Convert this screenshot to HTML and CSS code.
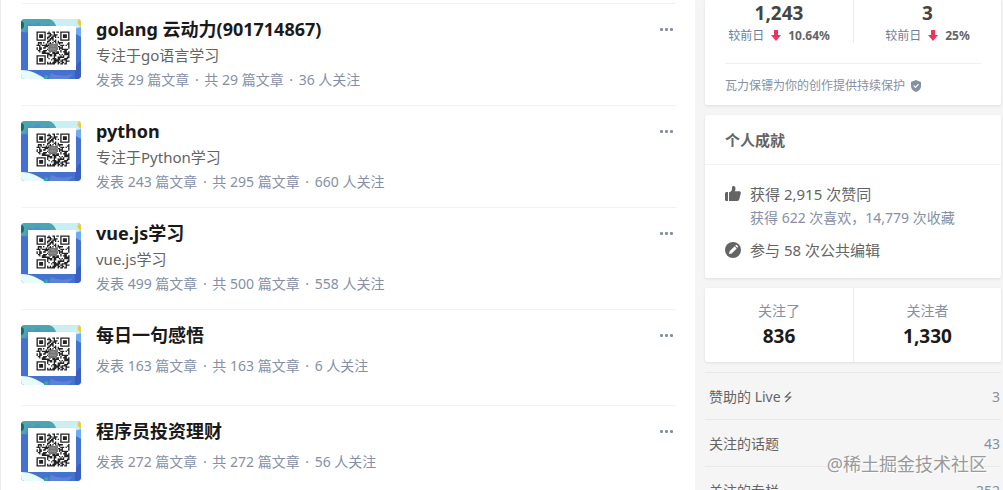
FILE: index.html
```html
<!DOCTYPE html>
<html lang="zh-CN">
<head>
    <meta charset="utf-8">
    <meta name="viewport" content="width=device-width, initial-scale=1">
    <title>专栏</title>
    <link rel="stylesheet" href="styles.css">
</head>
<body>
<svg class="defs" width="0" height="0" aria-hidden="true">
    <symbol id="cover" viewBox="0 0 60 60">
        <rect width="60" height="60" fill="#4373cf"/>
        <path d="M0 0h60v12L34 10 0 12z" fill="#c9eff5"/>
        <path d="M0 0h28q6 1 8 10L20 14 0 13z" fill="#4ba6b2"/>
        <path d="M7 4l5 2 5-3 4 4 7-2 4 8H4z" fill="#508fd0"/>
        <path d="M0 2q3 0 3 4T0 10z" fill="#176b62"/>
        <path d="M60 0q-5 2-3 5t3 2z" fill="#f1cb2b"/>
        <path d="M53 10l7-2v10l-5-3z" fill="#6faaf0"/>
        <path d="M60 42q-7 3-6 18h6z" fill="#3a5fc0"/>
        <path d="M0 51q8 0 14 3t11 6H0z" fill="#e6fbfa"/>
        <path d="M24 56l4 1-2 3h-3z" fill="#35a99d"/>
        <path d="M30 54q10 5 22 1l-5 5H28z" fill="#5e82dc"/>
        <rect x="7" y="7" width="48" height="44" fill="#fff"/>
        <path id="qr" d="" fill="#222"/>
        <rect x="28" y="25" width="8" height="8" fill="#777"/>
        <path d="M30 27h4M29 30h6" stroke="#999"/>
    </symbol>
    <symbol id="down" viewBox="0 0 10 11">
        <path d="M3 0h4v5h3L5 11 0 5h3z" fill="#f1325f"/>
    </symbol>
</svg>
<div class="page">
    <main class="columns">
        <article class="item">
            <svg class="cover"><use href="#cover"/></svg>
            <div class="info">
                <h2><a href="#">golang 云动力(901714867)</a></h2>
                <p class="desc">专注于go语言学习</p>
                <p class="meta">发表 29 篇文章 <span class="dot">·</span> 共 29 篇文章 <span class="dot">·</span> 36 人关注</p>
            </div>
            <button class="more" aria-label="更多"><i></i><i></i><i></i></button>
        </article>
        <article class="item">
            <svg class="cover"><use href="#cover"/></svg>
            <div class="info">
                <h2><a href="#">python</a></h2>
                <p class="desc">专注于Python学习</p>
                <p class="meta">发表 243 篇文章 <span class="dot">·</span> 共 295 篇文章 <span class="dot">·</span> 660 人关注</p>
            </div>
            <button class="more" aria-label="更多"><i></i><i></i><i></i></button>
        </article>
        <article class="item">
            <svg class="cover"><use href="#cover"/></svg>
            <div class="info">
                <h2><a href="#">vue.js学习</a></h2>
                <p class="desc">vue.js学习</p>
                <p class="meta">发表 499 篇文章 <span class="dot">·</span> 共 500 篇文章 <span class="dot">·</span> 558 人关注</p>
            </div>
            <button class="more" aria-label="更多"><i></i><i></i><i></i></button>
        </article>
        <article class="item">
            <svg class="cover"><use href="#cover"/></svg>
            <div class="info">
                <h2><a href="#">每日一句感悟</a></h2>
                <p class="meta">发表 163 篇文章 <span class="dot">·</span> 共 163 篇文章 <span class="dot">·</span> 6 人关注</p>
            </div>
            <button class="more" aria-label="更多"><i></i><i></i><i></i></button>
        </article>
        <article class="item">
            <svg class="cover"><use href="#cover"/></svg>
            <div class="info">
                <h2><a href="#">程序员投资理财</a></h2>
                <p class="meta">发表 272 篇文章 <span class="dot">·</span> 共 272 篇文章 <span class="dot">·</span> 56 人关注</p>
            </div>
            <button class="more" aria-label="更多"><i></i><i></i><i></i></button>
        </article>
    </main>

    <aside class="side">
        <section class="card creator">
            <div class="stats">
                <div class="stat">
                    <strong>1,243</strong>
                    <div class="trend">较前日 <svg class="arrow"><use href="#down"/></svg> <b>10.64%</b></div>
                </div>
                <div class="stat">
                    <strong>3</strong>
                    <div class="trend">较前日 <svg class="arrow"><use href="#down"/></svg> <b>25%</b></div>
                </div>
            </div>
            <a class="guard" href="#">瓦力保镖为你的创作提供持续保护
                <svg class="shield" viewBox="0 0 10 12"><path d="M5 0l5 2v4q0 4-5 6-5-2-5-6V2z" fill="#8590a6"/><path d="M2.700 5.700l1.800 1.800 3-3.300" fill="none" stroke="#fff" stroke-width="1.200"/></svg>
            </a>
        </section>

        <section class="card">
            <h3>个人成就</h3>
            <div class="achievements">
                <div class="achievement">
                    <svg class="icon" viewBox="0 0 16 16"><path d="M0 7.500Q0 6 1.500 6H3v9H1.500Q0 15 0 13.500zM4 6.500c3-1 3-3 3-5C7 .5 7.500 0 8.500 0 10 0 10.500 1.300 10.500 2.500c0 1-.3 2-.7 2.800h4.400c1.300 0 1.900 1 1.600 2l-1.500 6c-.3 1-1 1.700-2 1.700H4z" fill="#646464"/></svg>
                    <span>获得 2,915 次赞同</span>
                </div>
                <div class="sub">获得 622 次喜欢，14,779 次收藏</div>
                <div class="achievement">
                    <svg class="icon" viewBox="0 0 16 16"><circle cx="8" cy="8" r="8" fill="#646464"/><path d="M4 12l.6-2.700 5-5 2.100 2.100-5 5zM10.200 3.700l.7-.7q.4-.4.800 0l1.300 1.300q.4.400 0 .8l-.7.700z" fill="#fff"/></svg>
                    <span>参与 58 次公共编辑</span>
                </div>
            </div>
        </section>

        <section class="card follow">
            <a href="#">关注了<strong>836</strong></a>
            <a href="#">关注者<strong>1,330</strong></a>
        </section>

        <nav class="links">
            <a href="#"><span>赞助的 Live <svg class="bolt" viewBox="0 0 8 12"><path d="M6.500 1L1.500 6h5L1.500 11" fill="none" stroke="#646464" stroke-width="1.200"/></svg></span><span class="count">3</span></a>
            <a href="#"><span>关注的话题</span><span class="count">43</span></a>
            <a href="#"><span>关注的专栏</span><span class="count">352</span></a>
        </nav>
    </aside>
    <div class="watermark">@稀土掘金技术社区</div>
</div>
<script src="qr.js"></script>
</body>
</html>
```
FILE: styles.css
```css
* {
    box-sizing: border-box;
}
body {
    margin: 0;
    background: #f5f5f5;
    color: #646464;
    font-family: "Noto Sans", "Noto Sans CJK SC", sans-serif;
    font-size: 14px;
    line-height: 24px;
}
a {
    color: inherit;
    text-decoration: none;
}
h2, h3, p {
    margin: 0;
}
.defs {
    position: absolute;
}
.page {
    position: relative;
    display: grid;
    grid-template-columns: 1fr 308px;
    height: 100vh;
    overflow: hidden;
}

/* column list */
.columns {
    background: #fff;
    border-left: 1px solid #ebebeb;
    padding: 3px 19px 0 20px;
}
.item {
    display: flex;
    align-items: flex-start;
    border-top: 1px solid #f2f2f2;
    padding: 15px 0 13px;
}
.cover {
    flex: none;
    width: 60px;
    height: 60px;
    border-radius: 4px;
}
.info {
    flex: 1;
    min-height: 67px;
    margin-left: 15px;
}
.info h2 {
    color: #1a1a1a;
    font-size: 18px;
    line-height: 20px;
}
.desc {
    margin-top: 4px;
    font-size: 15px;
}
.meta {
    margin-top: 9px;
    color: #8590a6;
}
.desc + .meta {
    margin-top: 1px;
}
.dot {
    padding: 0 2px;
}
.more {
    display: flex;
    gap: 2px;
    border: 0;
    padding: 9px 3px;
    background: none;
    cursor: pointer;
}
.more i {
    width: 3px;
    height: 3px;
    border-radius: 1px;
    background: #8590a6;
}

/* sidebar */
.side {
    padding: 0 2px 0 10px;
}
.card {
    margin-bottom: 10px;
    border-radius: 2px;
    background: #fff;
    box-shadow: 0 1px 3px rgba(26, 26, 26, 0.1);
}
.creator {
    padding: 0 20px;
    font-size: 12px;
}
.stats {
    display: grid;
    grid-template-columns: 1fr 1fr;
    margin: 0 -20px 20px;
    text-align: center;
}
.stat + .stat {
    border-left: 1px solid #ebebeb;
}
.stat strong {
    display: block;
    color: #444;
    font-size: 19px;
    line-height: 26px;
}
.trend {
    display: flex;
    justify-content: center;
    align-items: center;
    gap: 7px;
    height: 17px;
    padding-top: 2px;
    color: #6b7f9c;
}
.trend b {
    color: #646464;
}
.arrow {
    width: 10px;
    height: 11px;
}
.guard {
    display: flex;
    align-items: center;
    gap: 6px;
    height: 42px;
    border-top: 1px solid #f0f0f0;
    padding-top: 2px;
    color: #8590a6;
}
.shield {
    width: 10px;
    height: 12px;
}
h3 {
    border-bottom: 1px solid #f3f3f3;
    padding: 1px 20px 0;
    font-size: 15px;
    line-height: 48px;
}
.achievements {
    padding: 16px 20px;
}
.achievement {
    display: flex;
    align-items: center;
    gap: 9px;
    height: 25px;
    font-size: 15px;
}
.icon {
    width: 16px;
    height: 16px;
}
.sub {
    margin: 0 0 7px 25px;
    color: #8590a6;
}
.follow {
    display: grid;
    grid-template-columns: 1fr 1fr;
    text-align: center;
}
.follow a {
    padding: 11px 0 13px;
    color: #8590a6;
}
.follow a + a {
    border-left: 1px solid #ebebeb;
}
.follow strong {
    display: block;
    color: #1a1a1a;
    font-size: 19px;
    line-height: 26px;
}
.links a {
    display: flex;
    justify-content: space-between;
    border-top: 1px solid #e9e9e9;
    padding: 2px 1px 0 4px;
    line-height: 44px;
}
.bolt {
    width: 8px;
    height: 12px;
    vertical-align: -1px;
}
.count {
    color: #8590a6;
}
.watermark {
    position: absolute;
    right: 16px;
    bottom: 14px;
    color: #999;
    font-size: 18px;
    text-shadow: 0 0 1px #fff, 1px 1px 1px #fff;
}
```
FILE: qr.js
```js
// fills the code on the column covers, 25 x 25 modules
var size = 25, step = 1.32, left = 15.5, top0 = 12.5
var seed = 901714867
var d = ''

function rand() {
    seed = (seed * 1103515245 + 12345) % 2147483648
    return seed / 2147483648
}

function finder(x, y) {
    if (x > 7 && x < size - 8 || y > 7 && y < size - 8 || x > 7 && y > 7) return -1
    if (x > 7) x = size - 1 - x
    if (y > 7) y = size - 1 - y
    if (x == 7 || y == 7) return 0
    var r = Math.max(Math.abs(x - 3), Math.abs(y - 3))
    return r == 2 ? 0 : 1
}

for (var y = 0; y < size; y++) {
    for (var x = 0; x < size; x++) {
        var f = finder(x, y)
        if (f == 1 || (f == -1 && rand() < 0.55))
            d += 'M' + (left + x * step) + ' ' + (top0 + y * step) + 'h' + step + 'v' + step + 'h-' + step + 'z'
    }
}
document.getElementById('qr').setAttribute('d', d)
```
